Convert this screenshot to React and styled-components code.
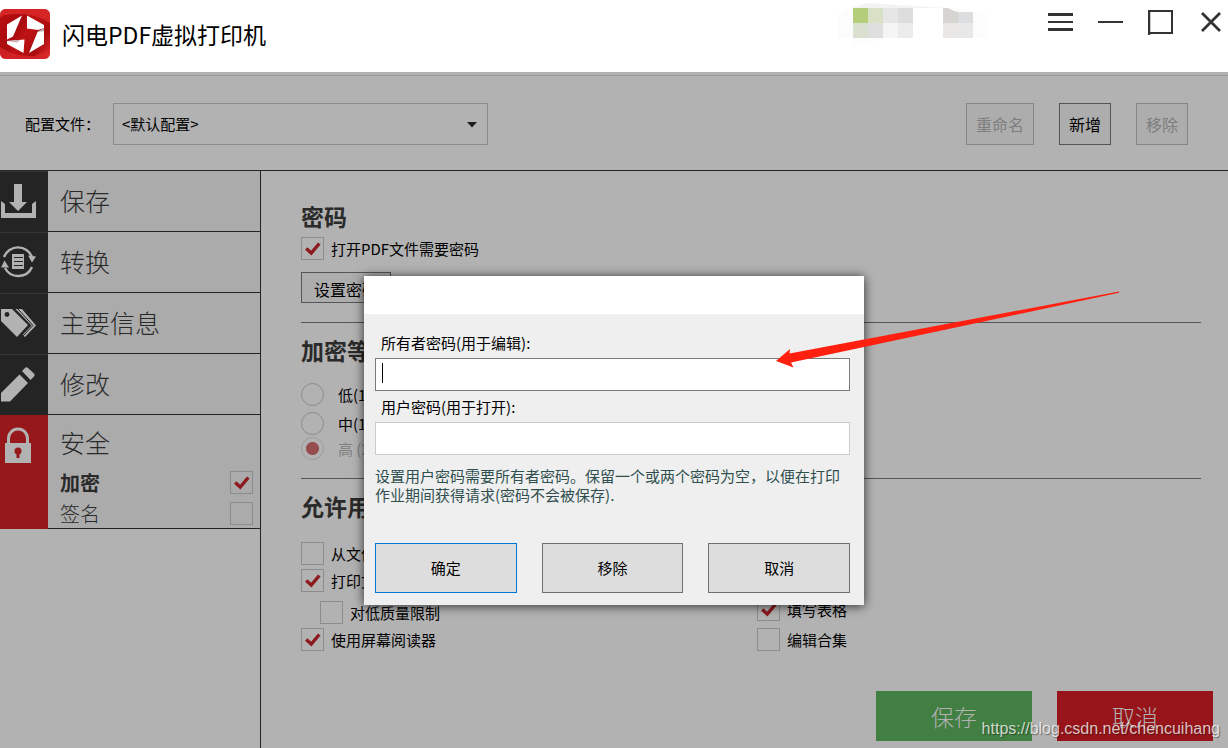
import { useId } from "react";
import styled, { createGlobalStyle } from "styled-components";

const GlobalStyle = createGlobalStyle`
  * {
    box-sizing: border-box;
  }
  body {
    margin: 0;
    background-color: #b2b2b2;
    color: #000;
    font-family: "Noto Sans CJK SC", sans-serif;
    font-size: 15px;
    line-height: 20px;
  }
  button,
  input,
  select {
    font: inherit;
    color: inherit;
  }
`;

const Page = styled.div`
  min-height: 100vh;
  display: flex;
  flex-direction: column;
  overflow: hidden;
`;

/* title bar */

const TitleBar = styled.header`
  height: 72px;
  display: flex;
  align-items: flex-start;
  background-color: #fff;
`;
const Brand = styled.div`
  flex: 1;
  display: flex;
  align-items: center;
  gap: 12px;
  padding-top: 9px;
`;
const AppTitle = styled.h1`
  margin: 0;
  font-size: 23px;
  font-weight: 400;
  line-height: 32px;
`;
const Mosaic = styled.svg`
  width: 150px;
  height: 48px;
  margin-right: 60px;
`;
const WindowControls = styled.div`
  height: 44px;
  display: flex;
  align-items: center;
  gap: 25px;
  padding-right: 5px;
`;
const WindowButton = styled.button`
  width: 25px;
  height: 25px;
  padding: 0;
  border: 0;
  background: none;
  cursor: pointer;

  svg {
    display: block;
  }
`;

/* profile bar */

const Workspace = styled.div`
  position: relative;
  flex: 1;
  display: flex;
  flex-direction: column;
  padding-top: 3px;
`;
const ProfileBar = styled.div`
  display: flex;
  align-items: center;
  gap: 25px;
  padding: 27px 40px 25px 25px;
  border-top: 1px solid #999;
  border-bottom: 1px solid #242424;
`;
const ProfileField = styled.div`
  flex: 1;
  display: flex;
  align-items: center;
  gap: 13px;
`;
const SelectBox = styled.div`
  position: relative;
  width: 375px;

  svg {
    position: absolute;
    top: 19px;
    right: 11px;
    pointer-events: none;
  }
`;
const Select = styled.select`
  display: block;
  width: 100%;
  height: 42px;
  padding: 0 8px;
  appearance: none;
  border: 1px solid #8c8c8c;
  border-radius: 0;
  background-color: transparent;
`;
const ProfileButton = styled.button`
  height: 42px;
  padding: 0 9px;
  border: 1px solid #555;
  background-color: #adadad;
  font-size: 16px;

  &:disabled {
    border-color: #858585;
    color: #7e7e7e;
  }
`;

/* side menu */

const Columns = styled.div`
  flex: 1;
  display: flex;
`;
const Sidebar = styled.nav`
  width: 261px;
  flex-shrink: 0;
  border-right: 1px solid #242424;
`;
const MenuItem = styled.div`
  display: flex;
  background-color: #ababab;
`;
const MenuIcon = styled.div`
  width: 48px;
  flex-shrink: 0;
  border-top: 1px solid ${(p) => (p.$active ? "#97181b" : "#363636")};
  background-color: ${(p) => (p.$active ? "#97181b" : "#242424")};

  svg {
    display: block;
  }
`;
const MenuBody = styled.div`
  flex: 1;
  padding-bottom: ${(p) => (p.$active ? 3 : 0)}px;
  border-bottom: 1px solid #242424;
`;
const MenuLink = styled.a`
  display: block;
  padding: 0 0 2px 12px;
  color: #2a2a2a;
  font-size: 25px;
  font-weight: 300;
  line-height: ${(p) => (p.$active ? 54 : 58)}px;
  text-decoration: none;
`;
const SubItem = styled.div`
  height: 23px;
  display: flex;
  align-items: center;
  justify-content: space-between;
  padding: 0 7px 0 12px;
  color: #2a2a2a;
  font-size: 20px;
  font-weight: ${(p) => (p.$bold ? 700 : 300)};

  & + & {
    margin-top: 8px;
  }
`;

/* settings */

const Main = styled.main`
  flex: 1;
  display: flex;
  flex-direction: column;
`;
const Settings = styled.div`
  padding: 18px 27px 0 40px;
`;
const Section = styled.section`
  padding: 11px 0 18px;
  border-bottom: 1px solid #555;

  &:last-child {
    border-bottom: 0;
  }
`;
const Heading = styled.h2`
  margin: 0 0 ${(p) => p.$space}px;
  color: #2a2a2a;
  font-size: 23px;
  font-weight: 700;
  line-height: 32px;
`;
const Stack = styled.div`
  display: flex;
  flex-direction: column;
  gap: ${(p) => p.$gap}px;
`;
const PermissionGrid = styled.div`
  display: grid;
  grid-template-columns: 1fr 1fr;
  gap: 12px;
  align-items: end;
`;
const Option = styled.div`
  display: flex;
  align-items: center;
  gap: ${(p) => p.$gap || 7}px;
  padding-left: ${(p) => (p.$indent ? 19 : 0)}px;
  color: ${(p) => (p.$faded ? "#808080" : "#000")};
  line-height: 23px;
`;
const CheckWrap = styled.span`
  position: relative;
  width: 23px;
  height: 23px;
  flex-shrink: 0;

  svg {
    position: absolute;
    inset: 0;
    pointer-events: none;
  }
  input:not(:checked) + svg {
    display: none;
  }
`;
const CheckInput = styled.input`
  display: block;
  width: 23px;
  height: 23px;
  margin: 0;
  appearance: none;
  border: 1px solid #8c8c8c;
`;
const RadioInput = styled.input`
  width: 23px;
  height: 23px;
  flex-shrink: 0;
  margin: 0;
  appearance: none;
  border: 1px solid #8c8c8c;
  border-radius: 50%;

  &:checked {
    border-color: #9c9c9c;
    background: radial-gradient(circle, #964c4f 6px, transparent 7px);
  }
`;
const SetPasswordButton = styled.button`
  align-self: flex-start;
  width: 90px;
  height: 31px;
  margin: 12px 0 1px;
  padding: 3px 12px 0;
  border: 1px solid #555;
  background-color: #adadad;
  font-size: 16px;
  text-align: left;
  white-space: nowrap;
  overflow: hidden;
`;
const Actions = styled.footer`
  display: flex;
  justify-content: flex-end;
  gap: 25px;
  margin-top: auto;
  padding: 0 15px 7px;
`;
const ActionButton = styled.button`
  width: 156px;
  height: 50px;
  border: 0;
  background-color: ${(p) => (p.$danger ? "#97151a" : "#417f42")};
  color: #b2b2b2;
  font-size: 23px;
  font-weight: 300;
`;

/* password dialog */

const Overlay = styled.div`
  position: absolute;
  inset: 0;
  display: flex;
  align-items: flex-start;
  justify-content: center;
  padding-top: 204px;
`;
const Dialog = styled.div`
  position: relative;
  width: 500px;
  background-color: #efefef;
  box-shadow: 0 1px 10px rgba(0, 0, 0, 0.75);
`;
const DialogTitle = styled.div`
  height: 38px;
  background-color: #fff;
`;
const DialogBody = styled.form`
  padding: 13px 14px 12px 11px;
`;
const FieldLabel = styled.label`
  display: block;
  padding-left: 6px;
  line-height: 31px;
`;
const PasswordInput = styled.input`
  display: block;
  width: 100%;
  height: 33px;
  padding: 0 6px;
  border: 1px solid #ccc;
  outline: 0;
  background-color: #fff;

  &:focus {
    border-color: #7a7a7a;
  }

  /* steady caret while the box is empty */
  &:focus:placeholder-shown {
    caret-color: transparent;
    background-image: linear-gradient(#000, #000);
    background-repeat: no-repeat;
    background-position: 6px 4px;
    background-size: 1px 20px;
  }
`;
const Note = styled.p`
  margin: 11px 0 39px;
  color: #2f4f4f;
  line-height: 19px;
`;
const DialogButtons = styled.div`
  display: flex;
  gap: 25px;
`;
const DialogButton = styled.button`
  flex: 1;
  height: 50px;
  border: 1px solid ${(p) => (p.$primary ? "#0078d7" : "#707070")};
  background-color: #ddd;
`;
const Pointer = styled.svg`
  position: absolute;
  left: 412px;
  top: 14px;
  pointer-events: none;
`;
const Watermark = styled.div`
  position: absolute;
  right: 8px;
  bottom: 9px;
  color: rgba(255, 255, 255, 0.75);
  font-family: "Liberation Sans", sans-serif;
  font-size: 16px;
  text-shadow: 1px 1px 1px rgba(0, 0, 0, 0.4);
  pointer-events: none;
`;

const Logo = () => (
  <svg width="50" height="50" viewBox="0 0 50 50" aria-hidden="true">
    <defs>
      <linearGradient id="logoRed" x1="0" y1="0.2" x2="1" y2="0.8">
        <stop offset="0" stopColor="#b80f12" />
        <stop offset="0.35" stopColor="#a80c0e" />
        <stop offset="0.5" stopColor="#c01315" />
        <stop offset="0.8" stopColor="#a80c0e" />
        <stop offset="1" stopColor="#cf2023" />
      </linearGradient>
      <linearGradient id="logoShade" x1="0" y1="0" x2="1" y2="1">
        <stop offset="0.6" stopColor="#fff" />
        <stop offset="1" stopColor="#bbb" />
      </linearGradient>
    </defs>
    <rect width="50" height="50" rx="6" fill="url(#logoRed)" />
    <path d="M6 0H44Q50 0 50 6V14Q32 2 6 6Q2 6 0 9V6Q0 0 6 0Z" fill="#dd2a2b" opacity="0.8" />
    <path d="M0 38Q14 48 34 47L50 40V44Q50 50 44 50H6Q0 50 0 44Z" fill="#dd2a2b" opacity="0.7" />
    <path d="M22 6.500L7 15.500V30.500L13 27.500Z" fill="url(#logoShade)" />
    <path d="M27 6.500L44 16V19L38 21L27 19.500Z" fill="#fff" />
    <path d="M7 32L24.500 30.500L23.500 44L7 35Z" fill="#fff" />
    <path d="M44 19V35L29 44L37.500 23Z" fill="#fff" />
    <path d="M37.500 23L44 19V22Z" fill="#aaa" />
    <path d="M7 32L20 31L17 33.500Z" fill="#c9b0b0" />
  </svg>
);

const TitleMosaic = () => (
  <Mosaic viewBox="0 0 150 48" aria-hidden="true">
    <path d="M0 16Q8 6 30 3L60 5L105 8H120L150 15V38H49L15 46V38H0Z" fill="#fcfcfc" />
    <path d="M15 8L30 3L60 5L110 8Z" fill="#f3f3f3" />
    <rect x="75" y="8" width="30" height="30" fill="#fff" />
    <rect x="15" y="8" width="15" height="15" fill="#b4cd7b" />
    <rect x="30" y="8" width="15" height="15" fill="#d8e1c5" />
    <rect x="45" y="8" width="15" height="15" fill="#e6e6e6" />
    <rect x="60" y="8" width="15" height="15" fill="#dddddd" />
    <rect x="15" y="23" width="15" height="15" fill="#d9e0d0" />
    <rect x="30" y="23" width="15" height="15" fill="#dfdfdf" />
    <rect x="45" y="23" width="15" height="15" fill="#f5f5f5" />
    <rect x="60" y="23" width="15" height="15" fill="#ececec" />
    <path d="M105 8H110L116 11L120 12V23H105Z" fill="#d6d5d2" />
    <rect x="120" y="12" width="15" height="11" fill="#dcdddf" />
    <rect x="105" y="23" width="15" height="15" fill="#e9e7e6" />
    <rect x="120" y="23" width="15" height="15" fill="#e8e8e8" />
  </Mosaic>
);

const SaveIcon = () => (
  <svg width="48" height="60" fill="#b2b2b2" aria-hidden="true">
    <path d="M14 12H22V30H27L18 39L9 30H14Z" />
    <path d="M1 29L5 32V41H32V32L36 29V46H1Z" />
  </svg>
);

const ConvertIcon = () => (
  <svg width="48" height="60" fill="none" aria-hidden="true">
    <path d="M4 24A15 15 0 0 1 32 24" stroke="#b2b2b2" strokeWidth="2.4" />
    <path d="M32 34A15 15 0 0 1 5 35" stroke="#b2b2b2" strokeWidth="2.4" />
    <path d="M28 22.5L36 23.5L32 29.5Z" fill="#b2b2b2" />
    <path d="M1 34.5H9L4.5 27.5Z" fill="#b2b2b2" />
    <rect x="12" y="21" width="12" height="15" fill="#b2b2b2" />
    <path d="M14 24.5H23M14 28.5H23M14 32.5H23" stroke="#242424" strokeWidth="1" />
  </svg>
);

const TagsIcon = () => (
  <svg width="48" height="60" aria-hidden="true">
    <path d="M1 15H12L28 31L17 43L1 27Z" fill="#b2b2b2" />
    <circle cx="7" cy="20.5" r="2.4" fill="#242424" />
    <path d="M15.5 15H22L36 31.5L25 43L22.5 41L31.5 31.5Z" fill="#b2b2b2" />
    <path d="M17.5 14.5L33 31.5L23 42" fill="none" stroke="#242424" strokeWidth="1" />
  </svg>
);

const PencilIcon = () => (
  <svg width="48" height="60" fill="#b2b2b2" aria-hidden="true">
    <path d="M1 38L19.5 19.5L28 28L10 46.500H1Z" />
    <path d="M22 16L25 13Q26.5 11.5 28 13L34 18.5Q35.5 20 34 21.5L30.5 25Z" />
  </svg>
);

const LockIcon = () => (
  <svg width="48" height="60" aria-hidden="true">
    <path d="M8.5 28V22.5A9.5 9.5 0 0 1 27.5 22.5V28" fill="none" stroke="#b2b2b2" strokeWidth="3" />
    <rect x="5" y="27" width="26" height="20" fill="#b2b2b2" />
    <circle cx="18" cy="35" r="3.5" fill="#97181b" />
    <path d="M16.5 35H19.5V42H16.5Z" fill="#97181b" />
  </svg>
);

const CheckBox = (props) => (
  <CheckWrap>
    <CheckInput type="checkbox" {...props} />
    <svg width="23" height="23" fill="none" aria-hidden="true">
      <path d="M5.2 11.5L10.3 16L18.3 6.5" stroke="#8c1a1e" strokeWidth="3.4" />
    </svg>
  </CheckWrap>
);

const CheckOption = ({ label, checked, indent }) => {
  const id = useId();
  return (
    <Option $indent={indent}>
      <CheckBox id={id} defaultChecked={checked} />
      <label htmlFor={id}>{label}</label>
    </Option>
  );
};

const RadioOption = ({ label, checked, faded }) => {
  const id = useId();
  return (
    <Option $gap={14} $faded={faded}>
      <RadioInput id={id} type="radio" name="level" defaultChecked={checked} />
      <label htmlFor={id}>{label}</label>
    </Option>
  );
};

const menu = [
  { label: "保存", Icon: SaveIcon },
  { label: "转换", Icon: ConvertIcon },
  { label: "主要信息", Icon: TagsIcon },
  { label: "修改", Icon: PencilIcon },
];

const App = () => {
  return (
    <>
      <GlobalStyle />
      <Page>
        <TitleBar>
          <Brand>
            <Logo />
            <AppTitle>闪电PDF虚拟打印机</AppTitle>
          </Brand>
          <TitleMosaic />
          <WindowControls>
            <WindowButton aria-label="菜单">
              <svg width="25" height="25" stroke="#333">
                <path d="M0 4.5H25M0 19.5H25" strokeWidth="3" />
                <path d="M0 12H25" strokeWidth="2" />
              </svg>
            </WindowButton>
            <WindowButton aria-label="最小化">
              <svg width="25" height="25" stroke="#333">
                <path d="M0 12H25" strokeWidth="2" />
              </svg>
            </WindowButton>
            <WindowButton aria-label="最大化">
              <svg width="25" height="25" stroke="#333" fill="none">
                <rect x="1" y="1" width="23" height="22" strokeWidth="2" />
                <path d="M1 0V25" strokeWidth="2.5" />
              </svg>
            </WindowButton>
            <WindowButton aria-label="关闭">
              <svg width="25" height="25" stroke="#333" fill="none">
                <path d="M4 3L22 21M22 3L4 21" strokeWidth="2.8" />
              </svg>
            </WindowButton>
          </WindowControls>
        </TitleBar>

        <Workspace>
          <ProfileBar>
            <ProfileField>
              <label htmlFor="profile">配置文件：</label>
              <SelectBox>
                <Select id="profile">
                  <option>&lt;默认配置&gt;</option>
                </Select>
                <svg width="10" height="6" fill="#1e1e1e" aria-hidden="true">
                  <path d="M0 0H10L5 5.5Z" />
                </svg>
              </SelectBox>
            </ProfileField>
            <ProfileButton disabled>重命名</ProfileButton>
            <ProfileButton>新增</ProfileButton>
            <ProfileButton disabled>移除</ProfileButton>
          </ProfileBar>

          <Columns>
            <Sidebar>
              {menu.map(({ label, Icon }) => (
                <MenuItem key={label}>
                  <MenuIcon>
                    <Icon />
                  </MenuIcon>
                  <MenuBody>
                    <MenuLink href="#">{label}</MenuLink>
                  </MenuBody>
                </MenuItem>
              ))}
              <MenuItem>
                <MenuIcon $active>
                  <LockIcon />
                </MenuIcon>
                <MenuBody $active>
                  <MenuLink href="#" $active>
                    安全
                  </MenuLink>
                  <SubItem $bold>
                    <label htmlFor="encrypt">加密</label>
                    <CheckBox id="encrypt" defaultChecked />
                  </SubItem>
                  <SubItem>
                    <label htmlFor="sign">签名</label>
                    <CheckBox id="sign" />
                  </SubItem>
                </MenuBody>
              </MenuItem>
            </Sidebar>

            <Main>
              <Settings>
                <Section>
                  <Heading $space={5}>密码</Heading>
                  <Stack>
                    <CheckOption label="打开PDF文件需要密码" checked />
                    <SetPasswordButton>设置密码</SetPasswordButton>
                  </Stack>
                </Section>
                <Section>
                  <Heading $space={17}>加密等级</Heading>
                  <Stack $gap={2}>
                    <Stack $gap={6}>
                      <RadioOption label="低(128 Bit)" />
                      <RadioOption label="中(128 Bit AES)" />
                    </Stack>
                    <RadioOption label="高 (256 Bit AES)" checked faded />
                  </Stack>
                </Section>
                <Section>
                  <Heading $space={20}>允许用户</Heading>
                  <PermissionGrid>
                    <Stack $gap={9}>
                      <Stack $gap={4}>
                        <CheckOption label="从文件复制内容" />
                        <CheckOption label="打印文件" checked />
                      </Stack>
                      <Stack $gap={4}>
                        <CheckOption label="对低质量限制" indent />
                        <CheckOption label="使用屏幕阅读器" checked />
                      </Stack>
                    </Stack>
                    <Stack $gap={7}>
                      <CheckOption label="填写表格" checked />
                      <CheckOption label="编辑合集" />
                    </Stack>
                  </PermissionGrid>
                </Section>
              </Settings>
              <Actions>
                <ActionButton>保存</ActionButton>
                <ActionButton $danger>取消</ActionButton>
              </Actions>
            </Main>
          </Columns>

          <Overlay>
            <Dialog role="dialog" aria-modal="true">
              <DialogTitle />
              <DialogBody>
                <FieldLabel htmlFor="owner">所有者密码(用于编辑):</FieldLabel>
                <PasswordInput id="owner" type="password" placeholder=" " autoFocus />
                <FieldLabel htmlFor="user">用户密码(用于打开):</FieldLabel>
                <PasswordInput id="user" type="password" placeholder=" " />
                <Note>
                  设置用户密码需要所有者密码。保留一个或两个密码为空，以便在打印作业期间获得请求(密码不会被保存).
                </Note>
                <DialogButtons>
                  <DialogButton type="button" $primary>
                    确定
                  </DialogButton>
                  <DialogButton type="button">移除</DialogButton>
                  <DialogButton type="button">取消</DialogButton>
                </DialogButtons>
              </DialogBody>
              <Pointer width="345" height="80" fill="#ff2010" aria-hidden="true">
                <path d="M0 71L14 59L13.500 63.500L343 1.500V2.800L15 72.500L17.500 77.500Z" />
              </Pointer>
            </Dialog>
          </Overlay>
          <Watermark>https://blog.csdn.net/chencuihang</Watermark>
        </Workspace>
      </Page>
    </>
  );
};

export default App;
